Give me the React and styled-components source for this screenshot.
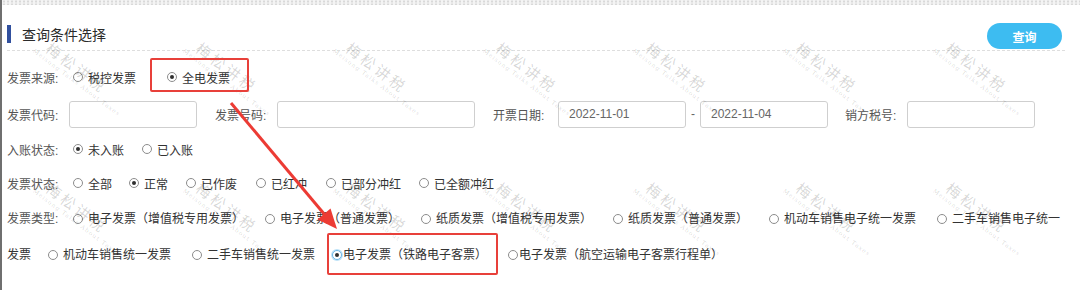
import React from "react";
import styled, { createGlobalStyle } from "styled-components";

const GlobalStyle = createGlobalStyle`
  html, body {
    margin: 0;
    padding: 0;
    background: #fff;
  }
  body {
    font-family: "Liberation Sans", "Noto Sans CJK SC", sans-serif;
  }
`;

const Page = styled.div`
  position: relative;
  width: 1080px;
  height: 290px;
  box-sizing: border-box;
  border-left: 2px solid #6f6f6f;
  background: #fff;
  overflow: hidden;
  font-size: 12px;
  color: #333;
`;

const TopStrip = styled.div`
  height: 5px;
  background-color: #f4f4f4;
  background-image: radial-gradient(circle, #d9d9d9 0.9px, transparent 1.3px);
  background-size: 4px 3px;
`;

const Header = styled.div`
  display: flex;
  align-items: flex-start;
  justify-content: space-between;
  height: 46px;
  box-sizing: border-box;
  padding: 18px 3px 0 0;
  margin: 0 15px 0 5px;
  border-bottom: 1px dashed #dedede;
`;

const Title = styled.div`
  margin-top: 2px;
  height: 18px;
  line-height: 18px;
  border-left: 4px solid #31509e;
  padding-left: 11px;
  font-size: 14px;
  color: #2b2b2b;
  font-family: "Noto Sans CJK SC", sans-serif;
`;

const QueryButton = styled.button`
  width: 75px;
  height: 26px;
  border: none;
  border-radius: 13px;
  background: #3dbcf1;
  color: #fff;
  font-size: 12px;
  font-weight: bold;
  font-family: "Noto Sans CJK SC", sans-serif;
  padding: 0;
`;

const Form = styled.div`
  padding: 8px 0 0 5px;
`;

const Row = styled.div`
  display: flex;
  align-items: center;
  height: ${(p) => p.$h}px;
`;

const Label = styled.span`
  flex: none;
  display: inline-block;
  width: ${(p) => p.$w || 66}px;
  margin-left: ${(p) => p.$ml || 0}px;
  color: #555;
  white-space: nowrap;
`;

const Field = styled.input`
  flex: none;
  width: ${(p) => p.$w}px;
  height: 27px;
  box-sizing: border-box;
  border: 1px solid #cfcfcf;
  border-radius: 3px;
  padding: 0 10px;
  font-size: 12px;
  font-family: "Liberation Sans", sans-serif;
  color: #666;
  background: #fff;
  outline: none;
`;

const Dash = styled.span`
  flex: none;
  width: 14px;
  text-align: center;
  color: #666;
`;

const Option = styled.span`
  display: ${(p) => (p.$inline ? "inline" : "inline-flex")};
  align-items: center;
  margin-right: ${(p) => p.$mr || 0}px;
  color: #333;
  white-space: ${(p) => (p.$inline ? "normal" : "nowrap")};
`;

const Radio = styled.span`
  display: inline-block;
  position: relative;
  flex: none;
  width: 10px;
  height: 10px;
  box-sizing: border-box;
  border: 1px solid ${(p) => (p.$focus ? "#6cb6e6" : "#8c8c8c")};
  border-radius: 50%;
  background: #fff;
  margin-right: ${(p) => (p.$tight ? 1 : 5)}px;
  vertical-align: -1px;
  box-shadow: ${(p) => (p.$focus ? "0 0 0 1px #bfe3f8" : "none")};

  &::after {
    content: "";
    display: ${(p) => (p.$checked ? "block" : "none")};
    position: absolute;
    left: 2px;
    top: 2px;
    width: 4px;
    height: 4px;
    border-radius: 50%;
    background: #2f2f2f;
  }
`;

const TypeFlow = styled.div`
  width: 1059px;
  margin-top: 0;
  line-height: 36px;
  color: #333;
`;

const Overlay = styled.div`
  position: absolute;
  top: 0;
  left: -2px;
  width: 1080px;
  height: 290px;
  pointer-events: none;
`;

const RedBox = styled.div`
  position: absolute;
  left: ${(p) => p.$x}px;
  top: ${(p) => p.$y}px;
  width: ${(p) => p.$w}px;
  height: ${(p) => p.$h}px;
  box-sizing: border-box;
  border: 2px solid #e8403a;
  border-radius: 2px;
`;

const Mark = styled.div`
  position: absolute;
  left: ${(p) => p.$x - 45}px;
  top: ${(p) => p.$y - 14}px;
  width: 90px;
  text-align: center;
  transform: rotate(37deg);
  transform-origin: center;
  font-family: "Noto Sans CJK SC", sans-serif;
`;

const MarkMain = styled.div`
  font-size: 15px;
  line-height: 17px;
  letter-spacing: 3px;
  color: rgba(0, 0, 0, 0.17);
`;

const MarkSub = styled.div`
  font-size: 6px;
  line-height: 7px;
  letter-spacing: 1px;
  color: rgba(0, 0, 0, 0.16);
  font-family: "DejaVu Serif", serif;
  white-space: nowrap;
`;

const ArrowSvg = styled.svg`
  position: absolute;
  left: 0;
  top: 0;
`;

function Choice({ children, checked, mr, tight, focus, inline }) {
  return (
    <Option $mr={mr} $inline={inline}>
      <Radio $checked={checked} $tight={tight} $focus={focus} />
      {children}
    </Option>
  );
}

const markCols = [75, 225, 375, 525, 675, 825, 975];
const markRows = [72, 212];

export default function App() {
  return (
    <>
      <GlobalStyle />
      <Page>
        <TopStrip />
        <Header>
          <Title>查询条件选择</Title>
          <QueryButton>查询</QueryButton>
        </Header>
        <Form>
          <Row $h={36}>
            <Label>发票来源:</Label>
            <Choice mr={31}>税控发票</Choice>
            <Choice checked>全电发票</Choice>
          </Row>
          <Row $h={38}>
            <Label $w={62}>发票代码:</Label>
            <Field $w={128} readOnly />
            <Label $w={62} $ml={18}>发票号码:</Label>
            <Field $w={198} readOnly />
            <Label $w={65} $ml={18}>开票日期:</Label>
            <Field $w={128} readOnly value="2022-11-01" />
            <Dash>-</Dash>
            <Field $w={128} readOnly value="2022-11-04" />
            <Label $w={62} $ml={17}>销方税号:</Label>
            <Field $w={128} readOnly />
          </Row>
          <Row $h={32}>
            <Label>入账状态:</Label>
            <Choice checked mr={18}>未入账</Choice>
            <Choice>已入账</Choice>
          </Row>
          <Row $h={36}>
            <Label>发票状态:</Label>
            <Choice mr={17}>全部</Choice>
            <Choice checked mr={18}>正常</Choice>
            <Choice mr={19}>已作废</Choice>
            <Choice mr={19}>已红冲</Choice>
            <Choice mr={18}>已部分冲红</Choice>
            <Choice>已全额冲红</Choice>
          </Row>
          <TypeFlow>
            <Label>发票类型:</Label>
            <Choice inline mr={21}>电子发票（增值税专用发票）</Choice>
            <Choice inline mr={21}>电子发票（普通发票）</Choice>
            <Choice inline mr={21}>纸质发票（增值税专用发票）</Choice>
            <Choice inline mr={21}>纸质发票（普通发票）</Choice>
            <Choice inline mr={21}>机动车销售电子统一发票</Choice>
            <Choice inline mr={17}>二手车销售电子统一发票</Choice>
            <Choice inline mr={21}>机动车销售统一发票</Choice>
            <Choice inline mr={17}>二手车销售统一发票</Choice>
            <Choice inline checked tight focus mr={21}>
              电子发票（铁路电子客票）
            </Choice>
            <Choice inline tight>电子发票（航空运输电子客票行程单）</Choice>
          </TypeFlow>
        </Form>

        <Overlay>
          {markRows.map((y) =>
            markCols.map((x) => (
              <Mark key={`${x}-${y}`} $x={x} $y={y}>
                <MarkMain>梅松讲税</MarkMain>
                <MarkSub>Meisong Talks About Taxes</MarkSub>
              </Mark>
            ))
          )}
          <RedBox $x={150} $y={58} $w={99} $h={34} />
          <RedBox $x={327} $y={233} $w={171} $h={42} />
          <ArrowSvg width="1080" height="290" viewBox="0 0 1080 290">
            <line
              x1="231"
              y1="103"
              x2="325"
              y2="215"
              stroke="#ec3b34"
              strokeWidth="3"
            />
            <polygon points="337,229 330.5,208.5 317.5,219.5" fill="#ec3b34" />
          </ArrowSvg>
        </Overlay>
      </Page>
    </>
  );
}
